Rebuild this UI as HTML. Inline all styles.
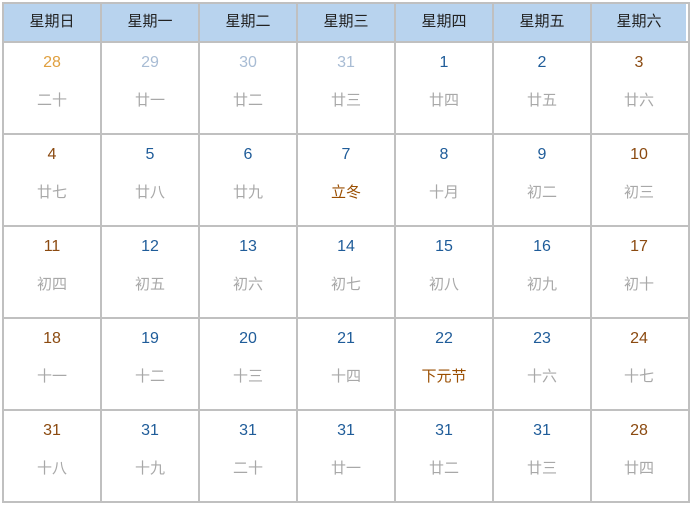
<!DOCTYPE html><html><head><meta charset="utf-8"><style>
body{margin:0;background:#fff;font-family:"Liberation Sans","Noto Sans CJK SC",sans-serif;}
.g{position:absolute;left:2px;top:2px;width:684px;height:497px;border:2px solid #c0c0c0;box-sizing:content-box}
.h{position:absolute;top:2px;height:39px;background:#b8d3ee;font-size:15px;color:#222;text-align:center;line-height:39px;width:96px}
.c{position:absolute;width:96px;text-align:center}
.n{position:absolute;left:0;right:0;top:10px;font-size:16px;line-height:20px}
.l{position:absolute;left:0;right:0;top:48px;font-size:15px;line-height:20px;color:#a8a8a8}
.vl{position:absolute;top:2px;width:2px;height:499px;background:#c0c0c0}
.hl{position:absolute;left:2px;width:686px;height:2px;background:#c0c0c0}
.b{color:#1f5c99}.w{color:#8b4a10}.p{color:#a8bcd4}.o{color:#e0a040}.f{color:#9a4e00}
</style></head><body>
<div id="r"></div>
<script>
var html='';var X=[4,102,200,298,396,494,592];
var W=[96,96,96,96,96,96,94];
var hd=['星期日','星期一','星期二','星期三','星期四','星期五','星期六'];
for(var i=0;i<7;i++)html+='<div class="h" style="left:'+X[i]+'px;width:'+W[i]+'px">'+hd[i]+'</div>';
var d=[[['28','二十','o'],['29','廿一','p'],['30','廿二','p'],['31','廿三','p'],['1','廿四'],['2','廿五'],['3','廿六','w']],
[['4','廿七','w'],['5','廿八'],['6','廿九'],['7','立冬',,1],['8','十月'],['9','初二'],['10','初三','w']],
[['11','初四','w'],['12','初五'],['13','初六'],['14','初七'],['15','初八'],['16','初九'],['17','初十','w']],
[['18','十一','w'],['19','十二'],['20','十三'],['21','十四'],['22','下元节',,1],['23','十六'],['24','十七','w']],
[['31','十八','w'],['31','十九'],['31','二十'],['31','廿一'],['31','廿二'],['31','廿三'],['28','廿四','w']]];
for(var r=0;r<5;r++)for(var c=0;c<7;c++){var e=d[r][c];html+='<div class="c" style="left:'+X[c]+'px;width:'+W[c]+'px;top:'+(43+r*92)+'px"><div class="n '+(e[2]||'b')+'">'+e[0]+'</div><div class="l'+(e[3]?' f':'')+'">'+e[1]+'</div></div>';}
html+='<div class="g"></div>';
for(var i=1;i<7;i++)html+='<div class="vl" style="left:'+(X[i]-2)+'px"></div>';
for(var r=0;r<5;r++)html+='<div class="hl" style="top:'+(41+r*92)+'px"></div>';
document.getElementById('r').innerHTML=html;
</script></body></html>
